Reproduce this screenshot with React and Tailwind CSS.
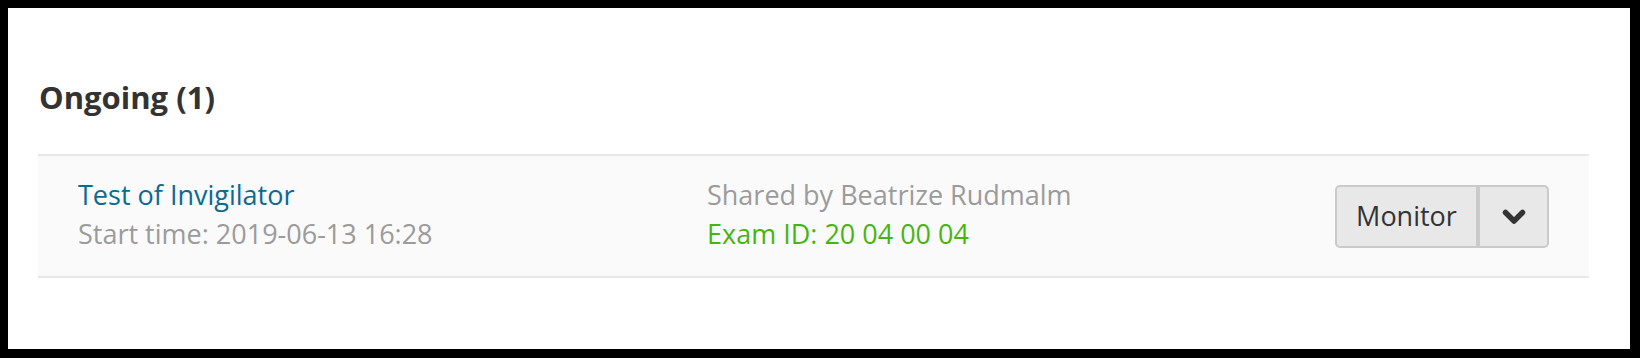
const font = { fontFamily: "'Open Sans', Lato, sans-serif" };

function ChevronIcon() {
  return (
    <svg width="24" height="16" viewBox="0 0 24 16" fill="none" aria-hidden>
      <path
        d="M3.5 3.5 L12 12 L20.5 3.5"
        stroke="#333"
        strokeWidth="5.5"
        strokeLinecap="round"
        strokeLinejoin="round"
      />
    </svg>
  );
}

function ExamRow({ title, start, sharedBy, examId }) {
  return (
    <div className="flex h-[124px] items-center border-y-2 border-[#e8e8e8] bg-[#fafafa] pl-[40px] pr-[40px]">
      <div className="w-[629px] shrink-0 pb-1 text-[27px] leading-[39px]">
        <div className="text-[#0b6a94]">{title}</div>
        <div className="text-[#9b9b9b]">Start time: {start}</div>
      </div>
      <div className="flex-1 pb-1 text-[27px] leading-[39px]">
        <div className="text-[#9b9b9b]">Shared by {sharedBy}</div>
        <div className="text-[#48b413]">Exam ID: {examId}</div>
      </div>
      <div className="flex">
        <button
          type="button"
          className="h-[63px] w-[143px] rounded-l-[5px] border-2 border-[#cacaca] bg-[#e8e8e8] text-[27px] text-[#333]"
        >
          Monitor
        </button>
        <button
          type="button"
          className="flex h-[63px] w-[71px] items-center justify-center rounded-r-[5px] border-2 border-[#cacaca] bg-[#e8e8e8] pt-0.5"
          aria-label="More actions"
        >
          <ChevronIcon />
        </button>
      </div>
    </div>
  );
}

export default function App() {
  return (
    <div
      className="box-border h-[358px] w-[1640px] border-t-8 border-r-[10px] border-b-[9px] border-l-8 border-black bg-white"
      style={font}
    >
      <div className="pl-[30px] pr-[41px] pt-[69px]">
        <h2 className="pl-px text-[31px] font-bold leading-[40px] text-[#333]">Ongoing (1)</h2>
        <div className="mt-[37px]">
          <ExamRow
            title="Test of Invigilator"
            start="2019-06-13 16:28"
            sharedBy="Beatrize Rudmalm"
            examId="20 04 00 04"
          />
        </div>
      </div>
    </div>
  );
}
